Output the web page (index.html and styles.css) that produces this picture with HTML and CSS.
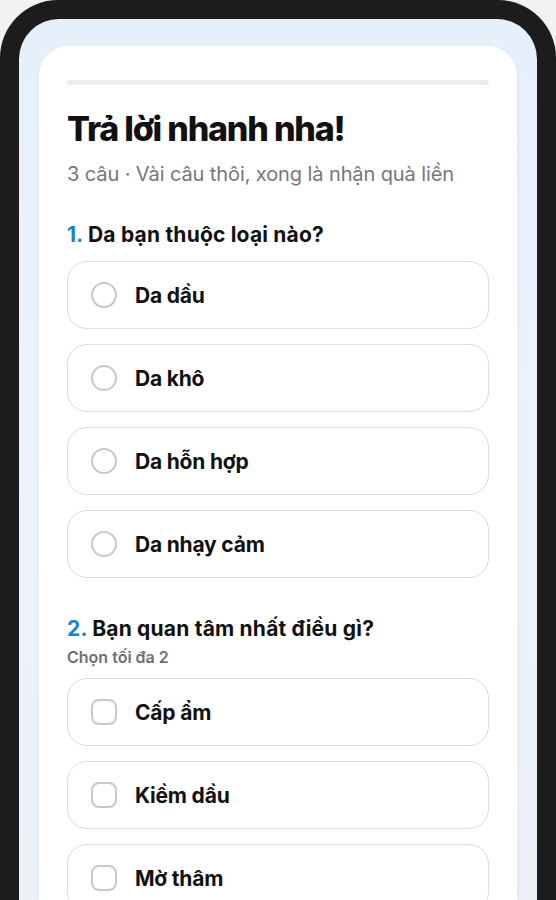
FILE: index.html
```html
<!DOCTYPE html>
<html lang="vi">
<head>
  <meta charset="UTF-8">
  <meta name="viewport" content="width=device-width, initial-scale=1.0">
  <title>Trả lời nhanh nha!</title>
  <link rel="stylesheet" href="styles.css">
</head>
<body>
  <div class="phone">
    <div class="screen">
      <div class="card">
        <div class="progress"><div class="progress-fill"></div></div>

        <h1>Trả lời nhanh nha!</h1>
        <p class="subtitle">3 câu · Vài câu thôi, xong là nhận quà liền</p>

        <div class="question">
          <h2><span class="num">1.</span> Da bạn thuộc loại nào?</h2>
          <div class="options">
            <div class="option"><span class="radio"></span><span>Da dầu</span></div>
            <div class="option"><span class="radio"></span><span>Da khô</span></div>
            <div class="option"><span class="radio"></span><span>Da hỗn hợp</span></div>
            <div class="option"><span class="radio"></span><span>Da nhạy cảm</span></div>
          </div>
        </div>

        <div class="question">
          <h2><span class="num">2.</span> Bạn quan tâm nhất điều gì?</h2>
          <p class="hint">Chọn tối đa 2</p>
          <div class="options">
            <div class="option"><span class="check"></span><span>Cấp ẩm</span></div>
            <div class="option"><span class="check"></span><span>Kiềm dầu</span></div>
            <div class="option"><span class="check"></span><span>Mờ thâm</span></div>
          </div>
        </div>
      </div>
    </div>
  </div>
</body>
</html>
```

FILE: styles.css
```css
html, body {
  margin: 0;
  padding: 0;
}
body {
  font-family: 'Inter', 'Roboto', sans-serif;
  background-color: #f2f2f4;
  color: #111;
  height: 900px;
  overflow: hidden;
}
.phone {
  background-color: #1c1c1e;
  border-radius: 58px 58px 0 0;
  padding: 19px 19px 0 19px;
  height: 900px;
  box-sizing: border-box;
}
.screen {
  background: linear-gradient(180deg, #e6f0fb 0%, #eaf2fb 40%, #ecf1f8 100%);
  border-radius: 40px 40px 0 0;
  padding: 27px 20px 0 20px;
  height: 100%;
  box-sizing: border-box;
}
.card {
  background-color: #fff;
  border-radius: 30px 30px 0 0;
  padding: 34px 28px 0 28px;
  height: 100%;
  box-sizing: border-box;
  box-shadow: 0 2px 10px rgba(30, 60, 110, 0.04);
}
.progress {
  height: 5px;
  border-radius: 3px;
  background-color: #ebebf0;
}
.progress-fill {
  width: 0;
}
h1 {
  font-size: 34px;
  font-weight: 800;
  letter-spacing: -1.2px;
  margin: 22px 0 0 0;
  line-height: 44px;
  color: #111;
}
.subtitle {
  font-size: 20px;
  color: #76767c;
  margin: 9px 0 0 0;
  line-height: 28px;
  letter-spacing: -0.1px;
}
.question {
  margin-top: 33px;
}
.question + .question {
  margin-top: 37px;
}
h2 {
  font-size: 21px;
  font-weight: 700;
  margin: 0;
  line-height: 28px;
  letter-spacing: 0.2px;
}
.num {
  color: #1a7fd6;
}
.hint {
  font-size: 16px;
  font-weight: 600;
  color: #6e6e74;
  margin: 4px 0 0 0;
  line-height: 21px;
}
.options {
  display: flex;
  flex-direction: column;
  gap: 15px;
  margin-top: 12px;
}
.hint + .options {
  margin-top: 10px;
}
.option {
  display: flex;
  align-items: center;
  gap: 18px;
  height: 68px;
  box-sizing: border-box;
  padding: 0 23px;
  border: 1px solid #dcdce1;
  border-radius: 20px;
  font-size: 21px;
  font-weight: 700;
  letter-spacing: -0.2px;
}
.radio {
  width: 26px;
  height: 26px;
  box-sizing: border-box;
  border: 2px solid #c8c8ce;
  border-radius: 50%;
  flex-shrink: 0;
}
.check {
  width: 26px;
  height: 26px;
  box-sizing: border-box;
  border: 2px solid #c8c8ce;
  border-radius: 8px;
  flex-shrink: 0;
}
```
